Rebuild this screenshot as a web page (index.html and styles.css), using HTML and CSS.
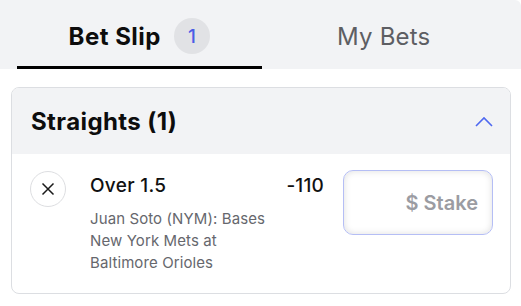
FILE: index.html
```html
<!DOCTYPE html>
<html>
<head>
<meta charset="utf-8">
<link rel="stylesheet" href="styles.css">
</head>
<body>
<div class="slip">
  <div class="tabs">
    <div class="tab active">
      <span class="tab-label">Bet Slip</span>
      <span class="badge">1</span>
    </div>
    <div class="tab">
      <span class="tab-label muted">My Bets</span>
    </div>
  </div>
  <div class="card">
    <div class="card-head">
      <span class="card-title">Straights (1)</span>
      <svg class="chevron" width="18" height="11" viewBox="0 0 18 11"><path d="M1 10 L9 2 L17 10" fill="none" stroke="#4e68f0" stroke-width="1.6"/></svg>
    </div>
    <div class="bet">
      <div class="remove">
        <svg width="14" height="14" viewBox="0 0 14 14"><path d="M1.5 1.5 L12.5 12.5 M12.5 1.5 L1.5 12.5" stroke="#1a1a1a" stroke-width="1.5" fill="none"/></svg>
      </div>
      <div class="info">
        <div class="selection">Over 1.5</div>
        <div class="market">Juan Soto (NYM): Bases</div>
        <div class="event">New York Mets at Baltimore Orioles</div>
      </div>
      <div class="odds">-110</div>
      <input class="stake" type="text" placeholder="$ Stake">
    </div>
  </div>
</div>
</body>
</html>
```

FILE: styles.css
```css
* { box-sizing: border-box; }
html, body { margin: 0; padding: 0; background: #ffffff; }
body { font-family: Inter, "Noto Sans", sans-serif; color: #111; }

.slip { width: 521px; }

.tabs {
  display: flex;
  background: #f2f3f5;
  padding: 0 15px 0 17px;
  height: 69px;
  border-top-right-radius: 6px;
}
.tab {
  flex: 1;
  display: flex;
  align-items: center;
  justify-content: center;
  gap: 13px;
  padding-top: 6px;
  border-bottom: 3px solid transparent;
}
.tab.active { border-bottom-color: #000; }
.tab-label { font-size: 24px; font-weight: 700; color: #0d0d0d; letter-spacing: 0.5px; }
.tab-label.muted { font-weight: 400; color: #5d5e63; letter-spacing: 0.2px; }
.badge {
  width: 36px; height: 36px; border-radius: 50%;
  background: #e1e2e5; color: #4b5de6;
  display: flex; align-items: center; justify-content: center;
  font-size: 19px; font-weight: 500;
}

.card {
  margin: 18px 10px 0 11px;
  border: 1px solid #dcdee2;
  border-radius: 8px;
  overflow: hidden;
}
.card-head {
  height: 66px;
  background: #f2f3f5;
  display: flex;
  align-items: center;
  justify-content: space-between;
  padding: 0 17px 0 19px;
}
.card-title { font-size: 24px; font-weight: 700; color: #0d0d0d; letter-spacing: 0.4px; }
.chevron { display: block; }

.bet {
  display: flex;
  align-items: flex-start;
  padding: 17px 17px 19px 18px;
}
.remove {
  width: 36px; height: 36px; border-radius: 50%;
  border: 1px solid #dddee1;
  display: flex; align-items: center; justify-content: center;
  flex: none;
}
.info { flex: 1; margin-left: 24px; padding-top: 4px; min-width: 0; }
.selection { font-size: 19px; font-weight: 500; line-height: 22px; color: #111; letter-spacing: 0.3px; }
.market { margin-top: 11px; font-size: 15px; line-height: 22px; color: #66676d; white-space: nowrap; letter-spacing: 0.1px; }
.event { font-size: 15px; line-height: 22px; color: #66676d; width: 180px; letter-spacing: 0.1px; }
.odds { width: 60px; text-align: right; font-size: 19px; font-weight: 500; line-height: 22px; padding-top: 4px; color: #111; flex: none; letter-spacing: 0.2px; }
.stake {
  margin-left: 19px;
  margin-top: -1px;
  width: 150px; height: 65px;
  border: 1px solid #b5bef5;
  border-radius: 10px;
  box-shadow: inset 0 0 7px rgba(0,0,0,0.13);
  background: #fff;
  text-align: right;
  padding: 0 14px 0 10px;
  font-family: Inter, "Noto Sans", sans-serif;
  font-size: 20px;
  font-weight: 600;
  color: #111;
  outline: none;
  flex: none;
}
.stake::placeholder { color: #9b9ca2; }
```
